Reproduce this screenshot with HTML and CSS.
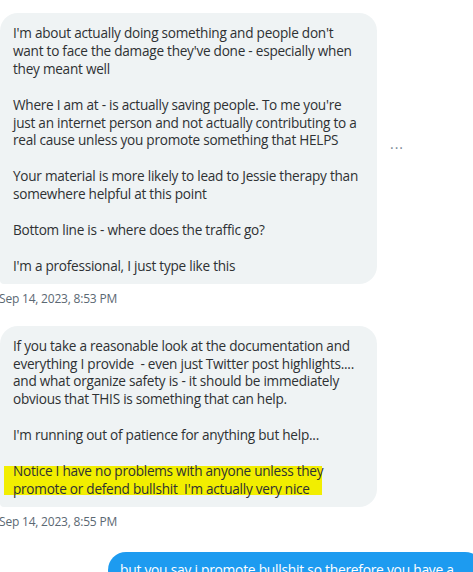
FILE: index.html
```html
<!DOCTYPE html>
<html>
<head>
<meta charset="utf-8">
<link rel="stylesheet" href="styles.css">
</head>
<body>
<div class="thread">
  <div class="row">
    <div class="bubble">
      <p>I'm about actually doing something and people don't<br>want to face the damage they've done - especially when<br>they meant well</p>
      <p>Where I am at - is actually saving people. To me you're<br>just an internet person and not actually contributing to a<br>real cause unless you promote something that HELPS</p>
      <p>Your material is more likely to lead to Jessie therapy than<br>somewhere helpful at this point</p>
      <p>Bottom line is - where does the traffic go?</p>
      <p>I'm a professional, I just type like this</p>
    </div>
    <div class="more">···</div>
  </div>
  <div class="stamp">Sep 14, 2023, 8:53 PM</div>

  <div class="row second">
    <div class="bubble">
      <p>If you take a reasonable look at the documentation and<br>everything I provide&nbsp; - even just Twitter post highlights....<br>and what organize safety is - it should be immediately<br>obvious that THIS is something that can help.</p>
      <p>I'm running out of patience for anything but help...</p>
      <p class="mark">Notice I have no problems with anyone unless they<br>promote or defend bullshit&nbsp; I'm actually very nice</p>
    </div>
  </div>
  <div class="stamp">Sep 14, 2023, 8:55 PM</div>

  <div class="mine">
    <div class="blue">but you say i promote bullshit so therefore you have a</div>
  </div>
</div>
</body>
</html>
```

FILE: styles.css
```css
html, body {
  margin: 0;
  padding: 0;
  background: #ffffff;
}
body {
  font-family: "Open Sans", "Noto Sans", sans-serif;
  width: 473px;
  height: 572px;
  overflow: hidden;
}
.thread {
  padding-top: 13px;
}
.row {
  display: flex;
  align-items: center;
  gap: 13px;
}
.row.second {
  margin-top: 19px;
}
.bubble {
  width: 377px;
  box-sizing: border-box;
  background: #eff3f4;
  border-radius: 18px 18px 18px 4px;
  padding: 11px 10px 9px 13px;
  color: #2e3133;
  font-size: 13.6px;
  line-height: 17.9px;
  letter-spacing: -0.25px;
}
.bubble p {
  margin: 0 0 17.9px 0;
  white-space: nowrap;
}
.bubble p:last-child {
  margin-bottom: 0;
}
.bubble p.mark {
  margin-left: -9px;
  padding-left: 9px;
  width: 309px;
  background-image: linear-gradient(#f2ee00, #f2ee00);
  background-repeat: no-repeat;
  background-size: 100% calc(100% - 7px);
  background-position: 0 4px;
}
.more {
  color: #7a8894;
  font-size: 14px;
  letter-spacing: 1px;
  line-height: 1;
}
.stamp {
  color: #5b6873;
  font-size: 12px;
  letter-spacing: -0.2px;
  margin-top: 7px;
  line-height: 16px;
  margin-left: -1px;
}
.mine {
  margin-top: 22px;
  padding-left: 108px;
}
.blue {
  background: #1d9bf0;
  color: #ffffff;
  border-radius: 22px 22px 4px 22px;
  padding: 9px 14px 9px 12px;
  font-size: 13.8px;
  letter-spacing: -0.25px;
  line-height: 18px;
  white-space: nowrap;
  margin-right: -10px;
}
```
